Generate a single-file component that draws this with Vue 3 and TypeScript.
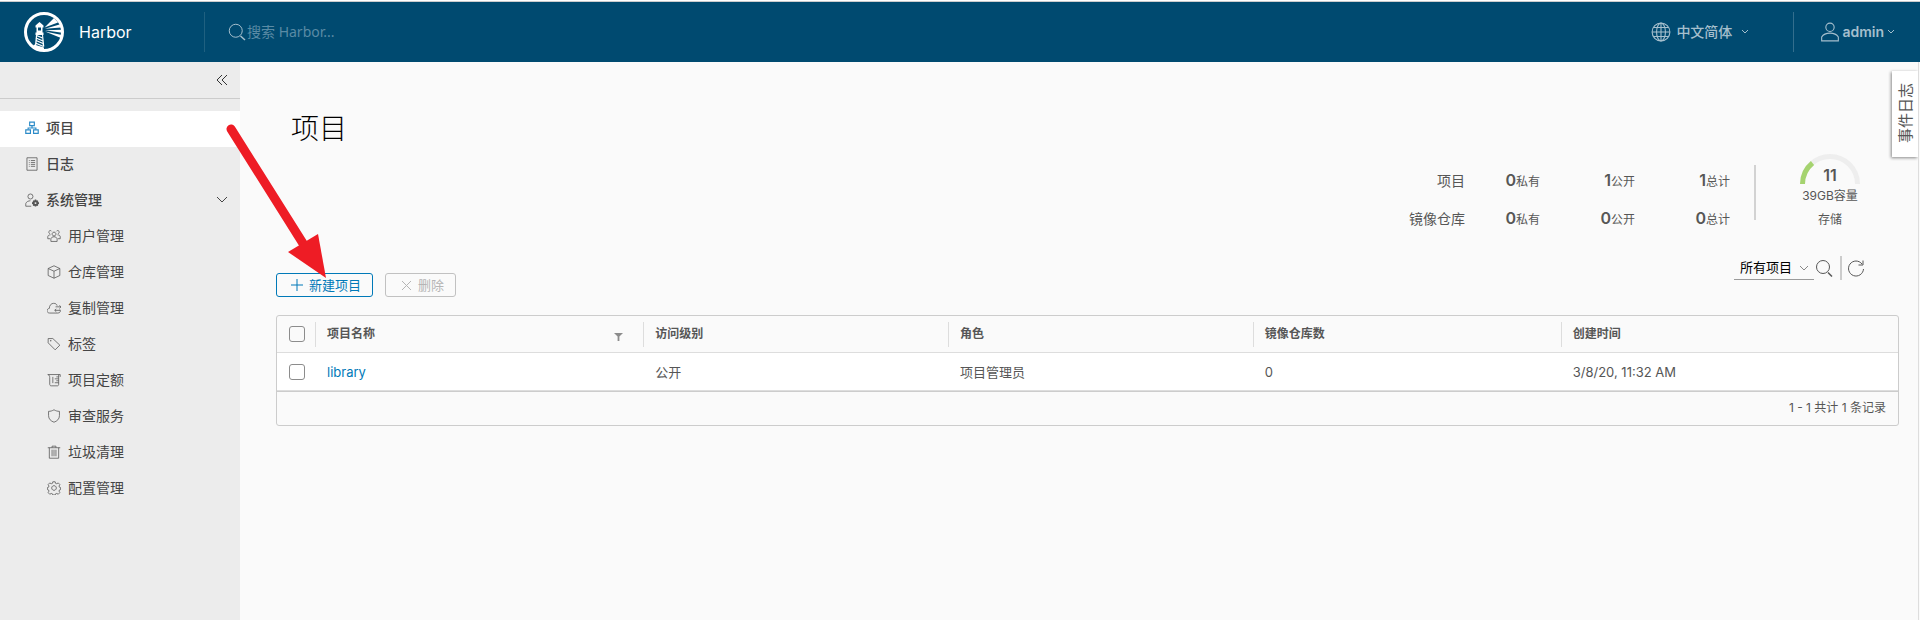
<script setup lang="ts">
import { ref } from 'vue'

interface NavItem {
  label: string
  icon: string
  active?: boolean
}

interface Project {
  name: string
  access: string
  role: string
  repos: number
  created: string
}

// Line icons on a 36 x 36 grid.
const icons: Record<string, string[]> = {
  projects: ['M12 3h12v9H12z', 'M2 23h12v9H2z', 'M22 23h12v9H22z', 'M8 22v-4h20v4M18 12v6'],
  logs: ['M5 2h26v32H5z', 'M10 9h2M15 9h11M10 14h2M15 14h11M10 19h2M15 19h11M10 24h2M15 24h11'],
  users: [
    'M18 8a5 5 0 1 0 .1 0z',
    'M10 32v-6c0-4 4-6 8-6s8 2 8 6v6z',
    'M12 6a4 4 0 1 0-4 6M24 6a4 4 0 1 1 4 6',
    'M8 25H2v-5c0-3 3-5 7-5M28 25h6v-5c0-3-3-5-7-5',
  ],
  repos: ['M18 2l15 7v18l-15 7-15-7V9z', 'M3 9l15 7 15-7M18 16v18'],
  replication: [
    'M33 22c3 4 1 9-5 9H7c-9 0-9-11-1-12 0-8 5-13 11-13 5 0 8 2 9 6',
    'M22 15h14M32 11l4 4-4 4M34 24H20M24 20l-4 4 4 4',
  ],
  labels: ['M3 4v11l18 18 12-12L15 4z', 'M9 9h1.500v1.500H9z'],
  quotas: ['M2 4h32v6M2 4c4 1 5 4 5 8v17c0 2 1 4 4 4h16c2 0 3-2 3-4V4', 'M24 10h6M20 15h10M24 20h6M20 25h10M15 10v16'],
  scanners: ['M18 2c5 3 9 4 14 4v11c0 9-6 14-14 17C10 31 4 26 4 17V6c5 0 9-1 14-4z'],
  garbage: ['M2 7h32M13 7V3h10v4M6 7v27h24V7', 'M13 12v17M18 12v17M23 12v17'],
  config: [
    'M15 2h6l1 4 3 1 4-2 4 4-2 4 1 3 3 1v5l-3 1-1 3 2 4-4 4-4-2-3 1-1 3h-6l-1-3-3-1-4 2-4-4 2-4-1-3-3-1v-5l3-1 1-3-2-4 4-4 4 2 3-1z',
    'M18 12a6 6 0 1 0 .1 0z',
  ],
}

const topNav: NavItem[] = [
  { label: '项目', icon: 'projects', active: true },
  { label: '日志', icon: 'logs' },
]

const adminNav: NavItem[] = [
  { label: '用户管理', icon: 'users' },
  { label: '仓库管理', icon: 'repos' },
  { label: '复制管理', icon: 'replication' },
  { label: '标签', icon: 'labels' },
  { label: '项目定额', icon: 'quotas' },
  { label: '审查服务', icon: 'scanners' },
  { label: '垃圾清理', icon: 'garbage' },
  { label: '配置管理', icon: 'config' },
]

const stats = [
  { label: '项目', cells: [[0, '私有'], [1, '公开'], [1, '总计']] },
  { label: '镜像仓库', cells: [[0, '私有'], [0, '公开'], [0, '总计']] },
]

const columns = ['项目名称', '访问级别', '角色', '镜像仓库数', '创建时间']

const projects: Project[] = [
  { name: 'library', access: '公开', role: '项目管理员', repos: 0, created: '3/8/20, 11:32 AM' },
]

const query = ref('')
const scope = ref('all')
const adminOpen = ref(true)
</script>

<template>
  <div class="app">
    <header class="header">
      <a class="brand" href="#">
        <svg class="logo" viewBox="0 0 40 40" aria-hidden="true">
          <circle cx="20" cy="20" r="18.500" class="ring" />
          <path class="light" d="M15.500 10l4 3.500v2h-1v5h1V23h-8v-2.500h1v-5h-1v-2z" />
          <path class="dark" d="M14 15.500h3v3h-3z" />
          <path class="light" d="M20.500 15.500L30 6l4 4.500zM21 16.800l14.500-4.300 1.500 3zM21 18.200l17-.4v3zM21 19.500l17 3.500-1 3z" />
          <path class="stripes" d="M12.500 23.500l6 2.500M12 26l7 3M12 28.500l7 3M11.500 31l8 3.500" />
          <path class="light" d="M12 22.500h1.300l-1 11H11zM18 22.500h1l1.300 12h-1.500zM10 32.500l10 3V39l-6-1-5-3z" />
        </svg>
        <span class="brand-name">Harbor</span>
      </a>
      <form class="search" role="search" @submit.prevent>
        <svg class="search-icon" viewBox="0 0 36 36" aria-hidden="true">
          <circle cx="15.500" cy="15.500" r="13" />
          <path d="M25 26l9 8" stroke-width="3" />
        </svg>
        <input v-model="query" type="search" placeholder="搜索 Harbor..." aria-label="搜索 Harbor" />
      </form>
      <button class="head-btn language" type="button">
        <svg class="icon20" viewBox="0 0 36 36" aria-hidden="true">
          <circle cx="18" cy="18" r="16" />
          <ellipse cx="18" cy="18" rx="8" ry="16" />
          <path d="M18 2v32M2 18h32M5 10h26M5 26h26" />
        </svg>
        <span>中文简体</span>
        <svg class="caret" viewBox="0 0 10 10" aria-hidden="true"><path d="M2 3l3 3 3-3" /></svg>
      </button>
      <button class="head-btn account" type="button">
        <svg class="icon20" viewBox="0 0 36 36" aria-hidden="true">
          <circle cx="18" cy="9.500" r="7.500" />
          <path d="M3 34v-7c3-5 9-7 15-7s12 2 15 7v7z" />
        </svg>
        <span>admin</span>
        <svg class="caret" viewBox="0 0 10 10" aria-hidden="true"><path d="M2 3l3 3 3-3" /></svg>
      </button>
    </header>

    <div class="body">
      <aside class="sidebar">
        <div class="collapse">
          <button type="button" aria-label="收起">
            <svg viewBox="0 0 12 12" aria-hidden="true"><path d="M6 1L1 6l5 5M11 1L6 6l5 5" /></svg>
          </button>
        </div>
        <nav class="nav">
          <a v-for="item in topNav" :key="item.icon" href="#" class="nav-item" :class="{ active: item.active }">
            <svg class="nav-icon" viewBox="0 0 36 36" aria-hidden="true">
              <path v-for="d in icons[item.icon]" :key="d" :d="d" />
            </svg>
            <span>{{ item.label }}</span>
          </a>
          <button type="button" class="nav-item" :aria-expanded="adminOpen" @click="adminOpen = !adminOpen">
            <svg class="nav-icon" viewBox="0 0 36 36" aria-hidden="true">
              <circle cx="14" cy="9" r="6.500" />
              <path d="M16 34H2v-7c2-5 7-7 12-7" />
              <circle cx="27" cy="26" r="5" stroke-width="5" />
              <path d="M27 17v4M27 31v4M18 26h4M32 26h4M21 20l2 2M31 30l2 2M33 20l-2 2M21 32l2-2" stroke-width="4" />
            </svg>
            <span>系统管理</span>
            <svg class="expand" viewBox="0 0 12 12" aria-hidden="true"><path d="M1 3l5 5 5-5" /></svg>
          </button>
          <template v-if="adminOpen">
            <a v-for="item in adminNav" :key="item.icon" href="#" class="nav-item sub">
              <svg class="nav-icon" viewBox="0 0 36 36" aria-hidden="true">
                <path v-for="d in icons[item.icon]" :key="d" :d="d" />
              </svg>
              <span>{{ item.label }}</span>
            </a>
          </template>
        </nav>
      </aside>

      <main class="main">
        <h1>项目</h1>

        <section class="summary">
          <div class="stats">
            <template v-for="row in stats" :key="row.label">
              <span class="stat-label">{{ row.label }}</span>
              <span v-for="[count, unit] in row.cells" :key="unit" class="stat">
                <b>{{ count }}</b>{{ unit }}
              </span>
            </template>
          </div>
          <div class="storage">
            <div class="gauge">
              <svg viewBox="0 0 60 30" aria-hidden="true">
                <path class="track" d="M2.500 30a27.500 27.500 0 0 1 55 0" />
                <path class="used" d="M2.500 30a27.500 27.500 0 0 1 10-21" />
              </svg>
              <b>11</b>
            </div>
            <span class="capacity">39GB容量</span>
            <span>存储</span>
          </div>
        </section>

        <div class="toolbar">
          <button type="button" class="btn primary">
            <svg viewBox="0 0 12 12" aria-hidden="true"><path d="M6 0v12M0 6h12" /></svg>
            <span>新建项目</span>
          </button>
          <button type="button" class="btn" disabled>
            <svg viewBox="0 0 12 12" aria-hidden="true"><path d="M2 2l9 9M11 2l-9 9" /></svg>
            <span>删除</span>
          </button>
          <div class="filters">
            <div class="select">
              <select v-model="scope" aria-label="项目范围">
                <option value="all">所有项目</option>
              </select>
              <svg viewBox="0 0 10 10" aria-hidden="true"><path d="M1 3l4 4 4-4" /></svg>
            </div>
            <button type="button" class="tool" aria-label="搜索">
              <svg viewBox="0 0 36 36" aria-hidden="true">
                <circle cx="16" cy="16" r="13" />
                <path d="M26 27l8 8" stroke-width="3" />
              </svg>
            </button>
            <span class="bar"></span>
            <button type="button" class="tool" aria-label="刷新">
              <svg viewBox="0 0 36 36" aria-hidden="true">
                <path d="M30 10A15 15 0 1 0 33 20" />
                <path d="M32 3v9h-9" />
              </svg>
            </button>
          </div>
        </div>

        <div class="grid">
          <table>
            <colgroup>
              <col class="c-check" />
              <col class="c-name" />
              <col class="c-access" />
              <col class="c-role" />
              <col class="c-repos" />
              <col />
            </colgroup>
            <thead>
              <tr>
                <th class="check"><input type="checkbox" aria-label="全选" /></th>
                <th v-for="(col, i) in columns" :key="col" scope="col">
                  <div class="th">
                    <span>{{ col }}</span>
                    <button v-if="i === 0" type="button" class="filter" aria-label="筛选">
                      <svg viewBox="0 0 10 10" aria-hidden="true"><path d="M0 1h10L6 5v5H4V5z" /></svg>
                    </button>
                  </div>
                </th>
              </tr>
            </thead>
            <tbody>
              <tr v-for="p in projects" :key="p.name">
                <td class="check"><input type="checkbox" :aria-label="p.name" /></td>
                <td><a href="#">{{ p.name }}</a></td>
                <td>{{ p.access }}</td>
                <td>{{ p.role }}</td>
                <td>{{ p.repos }}</td>
                <td>{{ p.created }}</td>
              </tr>
            </tbody>
          </table>
          <div class="grid-foot">1 - 1 共计 1 条记录</div>
        </div>
      </main>

      <button type="button" class="event-log"><span>事件日志</span></button>

      <svg class="arrow" viewBox="0 0 110 160" aria-hidden="true">
        <path class="shaft" d="M11 7L84 123" />
        <path class="head" d="M68 130L98 112L106 156z" />
      </svg>
    </div>
  </div>
</template>

<style>
body {
  background: #fafafa;
}
</style>

<style scoped>
.app {
  display: flex;
  flex-direction: column;
  min-height: 100vh;
  box-sizing: border-box;
  border-top: 1px solid #fff;
  font: 13px/20px Inter, 'Noto Sans CJK SC', sans-serif;
  color: #565656;
  background: #fafafa;
}
button,
input,
select {
  font: inherit;
  color: inherit;
  margin: 0;
  padding: 0;
  border: 0;
  background: none;
}
a {
  text-decoration: none;
  color: inherit;
}
svg {
  flex: none;
  fill: none;
  stroke: currentColor;
}

.header {
  display: flex;
  align-items: center;
  height: 60px;
  border-top: 1px solid #ccc;
  background: #004a70;
  color: #a5bfcd;
}
.brand {
  display: flex;
  align-items: center;
  gap: 15px;
  width: 180px;
  padding-left: 24px;
  color: #fff;
}
.logo {
  width: 40px;
  height: 40px;
  stroke: none;
}
.ring {
  stroke: #fff;
  stroke-width: 3;
}
.light {
  fill: #fff;
}
.dark {
  fill: #004a70;
}
.stripes {
  stroke: #fff;
  stroke-width: 1.3;
}
.brand-name {
  font-size: 16px;
  line-height: 24px;
}
.search {
  display: flex;
  flex: 1;
  align-items: center;
  gap: 1px;
  height: 40px;
  padding-left: 23px;
  border-left: 1px solid #1f6080;
}
.search-icon {
  width: 18px;
  height: 18px;
  stroke-width: 2;
}
.search input {
  flex: 1;
  font-family: 'Noto Sans', 'Noto Sans CJK SC', sans-serif;
  font-size: 14px;
  outline: 0;
}
.search input::placeholder {
  color: #5a8ba5;
  opacity: 1;
}
.head-btn {
  display: flex;
  align-items: center;
  height: 40px;
  font-size: 14px;
  font-weight: 500;
}
.icon20 {
  width: 20px;
  height: 20px;
  stroke-width: 2;
}
.caret {
  width: 10px;
  height: 10px;
}
.language {
  gap: 5px;
  padding-right: 43px;
}
.language .caret {
  margin-left: 3px;
}
.account {
  gap: 2px;
  padding: 0 24px 0 26px;
  border-left: 1px solid #336e8d;
  font-weight: 600;
}

.body {
  position: relative;
  display: flex;
  flex: 1;
}
.sidebar {
  flex: none;
  width: 240px;
  background: #ececec;
}
.collapse {
  display: flex;
  justify-content: flex-end;
  align-items: center;
  height: 36px;
  padding-right: 12px;
  border-bottom: 1px solid #ccc;
  color: #333;
}
.collapse button {
  display: flex;
}
.collapse svg {
  width: 12px;
  height: 12px;
}
.nav {
  padding-top: 12px;
}
.nav-item {
  display: flex;
  align-items: center;
  box-sizing: border-box;
  width: 100%;
  height: 36px;
  gap: 7px;
  padding: 0 12px 2px 25px;
  font-size: 14px;
  font-weight: 500;
  color: #454545;
}
.nav-item.active {
  background: #fff;
}
.nav-item.sub {
  padding-left: 47px;
  font-weight: 400;
}
.nav-icon {
  width: 14px;
  height: 14px;
  stroke-width: 2;
  color: #565656;
}
.active .nav-icon {
  color: #2c8bc8;
  stroke-width: 3;
}
.expand {
  width: 12px;
  height: 12px;
  margin-left: auto;
}

.main {
  flex: 1;
  min-width: 0;
  margin-right: 1px;
  padding: 49px 19px 24px 36px;
  border-right: 1px solid #ddd;
}
h1 {
  margin: 0;
  padding-left: 15px;
  font-size: 28px;
  line-height: 36px;
  font-weight: 300;
  color: #000;
}
.summary {
  display: flex;
  justify-content: flex-end;
  padding: 7px 24px 0 0;
}
.stats {
  display: grid;
  grid-template-columns: auto 75px 95px 95px;
  grid-auto-rows: 38px;
  align-items: center;
  justify-items: end;
  padding: 8px 24px 0 0;
}
.stat-label {
  font-size: 14px;
}
.stat {
  font-size: 12px;
}
.stat b,
.gauge b {
  font-size: 16px;
  font-weight: 600;
}
.storage {
  display: flex;
  flex-direction: column;
  align-items: center;
  width: 90px;
  padding-left: 31px;
  background: linear-gradient(#d2d2d2, #d2d2d2) 0 11px / 2px 55px no-repeat;
  font-size: 12px;
  line-height: 18px;
}
.gauge {
  display: grid;
  width: 60px;
  height: 30px;
}
.gauge svg,
.gauge b {
  grid-area: 1 / 1;
}
.gauge svg {
  stroke-width: 5;
}
.track {
  stroke: #eee;
}
.used {
  stroke: #a5d36f;
}
.gauge b {
  align-self: end;
  justify-self: center;
}
.capacity {
  padding: 3px 0 6px;
}

.toolbar {
  display: flex;
  align-items: flex-end;
  gap: 12px;
  padding: 18px 33px 18px 0;
}
.btn {
  display: flex;
  align-items: center;
  gap: 6px;
  height: 24px;
  padding: 0 11px 0 14px;
  border: 1px solid #c1c1c1;
  border-radius: 3px;
  color: #b5b5b5;
}
.btn.primary {
  border-color: #0079b8;
  color: #0079b8;
}
.btn svg {
  width: 12px;
  height: 12px;
}
.filters {
  display: flex;
  align-self: flex-start;
  align-items: center;
  height: 24px;
  margin: 0 0 17px auto;
}
.select {
  position: relative;
  border-bottom: 1px solid #9a9a9a;
  color: #000;
}
.select select {
  display: block;
  appearance: none;
  width: 80px;
  height: 22px;
  padding: 0 0 2px 6px;
}
.select svg {
  position: absolute;
  right: 5px;
  top: 6px;
  width: 10px;
  height: 10px;
  color: #888;
  pointer-events: none;
}
.tool {
  display: flex;
  padding: 0 1px;
}
.tool svg {
  width: 18px;
  height: 18px;
  stroke-width: 2;
}
.bar {
  width: 2px;
  height: 24px;
  margin: 0 4px 0 6px;
  background: #ccc;
}

.grid {
  border: 1px solid #ccc;
  border-radius: 3px;
}
table {
  width: 100%;
  table-layout: fixed;
  border-collapse: separate;
  border-spacing: 0;
}
.c-check {
  width: 38px;
}
.c-name {
  width: 20.25%;
}
.c-access {
  width: 18.8%;
}
.c-role {
  width: 18.8%;
}
.c-repos {
  width: 19%;
}
th,
td {
  height: 36px;
  padding: 0 12px;
  border-bottom: 1px solid #ddd;
  text-align: left;
  font-weight: 400;
}
th {
  font-size: 12px;
  background: linear-gradient(#ddd, #ddd) 0 6px / 1px 25px no-repeat;
}
td {
  height: 37px;
  background: #fff;
}
td a {
  color: #0079b8;
}
.check {
  background-image: none;
}
.th {
  display: flex;
  align-items: center;
  justify-content: space-between;
  font-weight: 700;
}
.filter {
  display: flex;
  padding: 4px 8px 0 0;
}
.filter svg {
  width: 9px;
  height: 9px;
  fill: #8c8c8c;
  stroke: none;
}
input[type='checkbox'] {
  display: block;
  appearance: none;
  box-sizing: border-box;
  width: 16px;
  height: 16px;
  border: 1px solid #8c8c8c;
  border-radius: 3px;
}
input[type='checkbox']:checked {
  background: #0079b8;
}
.grid-foot {
  height: 33px;
  padding-right: 12px;
  border-top: 1px solid #ccc;
  text-align: right;
  font-size: 12px;
  line-height: 32px;
}

.event-log {
  position: absolute;
  top: 9px;
  right: 2px;
  width: 26px;
  height: 86px;
  padding: 4px 0 0 2px;
  background: #fff;
  box-shadow: -1px 1px 3px #888;
  clip-path: inset(-4px 0 -4px -4px);
  font-size: 15px;
}
.event-log span {
  display: inline-block;
  writing-mode: vertical-rl;
  text-orientation: sideways;
  transform: rotate(180deg);
}
.arrow {
  position: absolute;
  left: 220px;
  top: 60px;
  width: 110px;
  height: 160px;
  pointer-events: none;
}
.shaft {
  stroke: #ee1c25;
  stroke-width: 9;
  stroke-linecap: round;
}
.head {
  fill: #ee1c25;
  stroke: none;
}
</style>
